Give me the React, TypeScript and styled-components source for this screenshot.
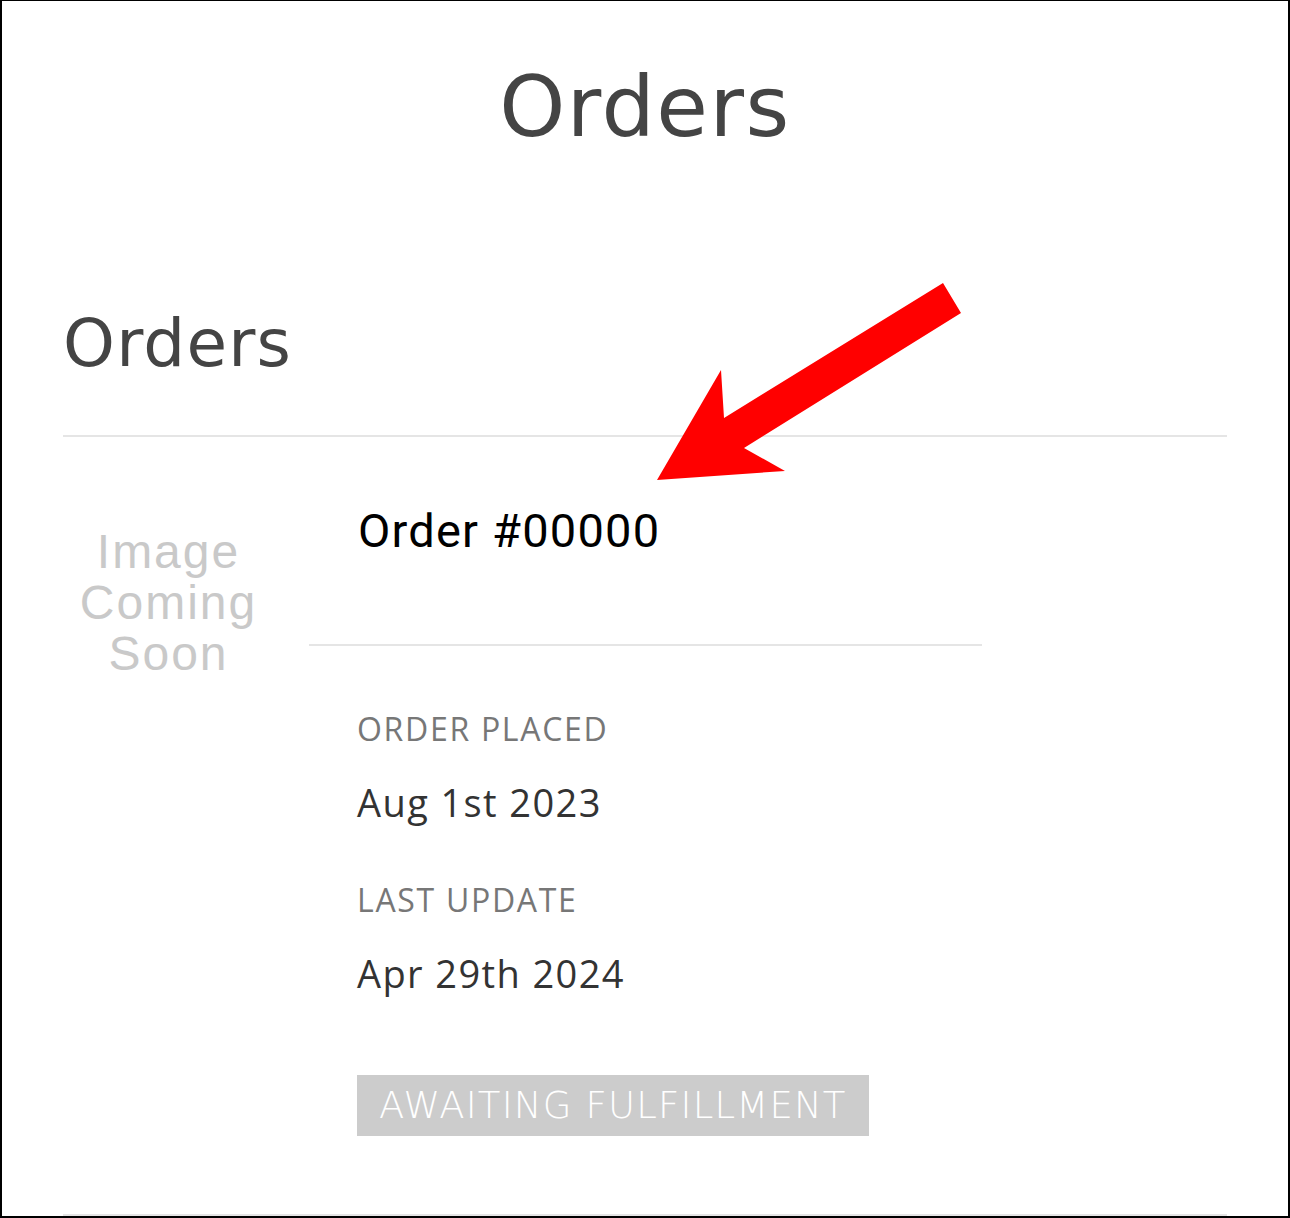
import React from "react";
import styled, { createGlobalStyle } from "styled-components";

const Global = createGlobalStyle`
  html, body { margin: 0; padding: 0; background: #fff; }
  * { box-sizing: border-box; }
`;

const Page = styled.div`
  position: relative;
  width: 1290px;
  height: 1218px;
  overflow: hidden;
  border-style: solid;
  border-color: #000;
  border-width: 1px 2px 2px 2px;
  padding: 0 61px;
  background: #fff;
`;

const PageTitle = styled.h1`
  margin: 64px 0 0;
  font-family: "DejaVu Sans", sans-serif;
  font-weight: 400;
  font-size: 84px;
  line-height: 84px;
  height: 84px;
  letter-spacing: 1.5px;
  color: #444;
  text-align: center;
`;

const SectionTitle = styled.h2`
  margin: 162px 0 0;
  font-family: "DejaVu Sans", sans-serif;
  font-weight: 400;
  font-size: 66px;
  line-height: 66px;
  height: 66px;
  letter-spacing: 1.2px;
  color: #444;
`;

const OrderList = styled.div`
  margin-top: 58px;
`;

const OrderRow = styled.div`
  display: flex;
  gap: 35px;
  border-top: 2px solid #e5e5e5;
  border-bottom: 2px solid #e5e5e5;
  padding-bottom: 78px;
`;

const ImageCol = styled.div`
  width: 211px;
  flex: none;
  padding-top: 89px;
  font-family: "Liberation Sans", Arial, sans-serif;
  font-size: 48px;
  line-height: 51px;
  letter-spacing: 2px;
  color: #c9c9c9;
  text-align: center;
`;

const Details = styled.div`
  width: 673px;
  flex: none;
`;

const Heading = styled.div`
  padding: 70px 0 90px 49px;
  border-bottom: 2px solid #e5e5e5;
  font-family: Roboto, "Liberation Sans", sans-serif;
  font-size: 47px;
  line-height: 47px;
  letter-spacing: 1.2px;
  color: #000;
`;

const Info = styled.div`
  padding-left: 48px;
`;

const Label = styled.div<{ $gap: number }>`
  margin-top: ${(p) => p.$gap}px;
  font-family: "Open Sans", sans-serif;
  font-size: 32px;
  line-height: 32px;
  letter-spacing: 1.7px;
  color: #777;
  text-transform: uppercase;
`;

const Value = styled.div`
  margin-top: 38px;
  font-family: "Open Sans", sans-serif;
  font-size: 38px;
  line-height: 38px;
  letter-spacing: 1.4px;
  color: #333;
`;

const Badge = styled.div`
  display: inline-block;
  margin-top: 83px;
  height: 61px;
  padding: 0 22px;
  background: #ccc;
  font-family: "DejaVu Sans", sans-serif;
  font-weight: 200;
  font-size: 37px;
  line-height: 61px;
  letter-spacing: 1.2px;
  color: #fff;
  white-space: nowrap;
`;

const Arrow = styled.svg`
  position: absolute;
  left: 0;
  top: 0;
  pointer-events: none;
`;

export default function App() {
  return (
    <>
      <Global />
      <Page>
        <PageTitle>Orders</PageTitle>
        <SectionTitle>Orders</SectionTitle>
        <OrderList>
          <OrderRow>
            <ImageCol>
              Image
              <br />
              Coming
              <br />
              Soon
            </ImageCol>
            <Details>
              <Heading>Order #00000</Heading>
              <Info>
                <Label $gap={67}>Order Placed</Label>
                <Value>Aug 1st 2023</Value>
                <Label $gap={63}>Last Update</Label>
                <Value>Apr 29th 2024</Value>
                <Badge>AWAITING FULFILLMENT</Badge>
              </Info>
            </Details>
          </OrderRow>
        </OrderList>
        <Arrow width="1290" height="1218" viewBox="0 0 1290 1218">
          <polygon
            points="941,282 959,312 742,447 783,470 655,479 719,369 722,417"
            fill="#ff0000"
          />
        </Arrow>
      </Page>
    </>
  );
}
